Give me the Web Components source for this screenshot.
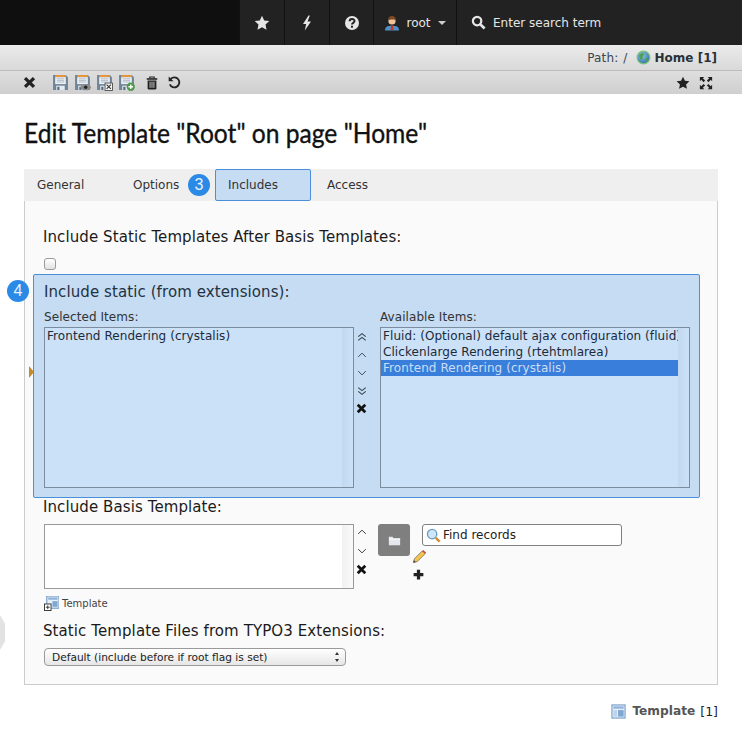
<!DOCTYPE html>
<html>
<head>
<meta charset="utf-8">
<title>Edit Template</title>
<style>
html, body { margin: 0; padding: 0; background: #fff; }
body { font-family: "DejaVu Sans", Verdana, sans-serif; color: #222; width: 742px; height: 732px; overflow: hidden; position: relative; }
</style>
</head>
<body>
<x-topbar></x-topbar>
<x-pathbar></x-pathbar>
<x-toolbar></x-toolbar>
<x-page></x-page>

<script>
const saveBase = `
  <path d="M1 1h12l2 2v12H1z" fill="#6f8499"/>
  <rect x="3" y="1" width="10" height="2" fill="#e8963a"/>
  <rect x="3" y="3" width="10" height="6.5" fill="#eef1f4"/>
  <path d="M4.5 4.5h7M4.5 6h7M4.5 7.5h7" stroke="#aab6c2" stroke-width=".8"/>
  <rect x="4" y="11" width="8" height="4" fill="#e6eaee"/>
  <rect x="5" y="12" width="2" height="3" fill="#55677a"/>`;

const ICONS = {
    star: `<path d="M8 .8l2.2 4.7 5.1.6-3.8 3.5 1 5.1L8 12.2l-4.5 2.5 1-5.1L.7 6.1l5.1-.6z" fill="currentColor"/>`,
    bolt: `<path d="M9.5.5L4 9h3.2L5.8 15.5 12 6.5H8.6L10.8.5z" fill="currentColor"/>`,
    help: `<circle cx="8" cy="8" r="7" fill="currentColor"/><path d="M5.6 6.3c0-3.1 4.9-3.1 4.9-.2 0 1.800-2.500 1.800-2.500 3.500" fill="none" stroke="#222" stroke-width="2"/><rect x="7" y="10.700" width="2" height="2" fill="#222"/>`,
    user: `<path d="M1 15.500c0-3.500 2-4.800 7-4.800s7 1.300 7 4.800z" fill="#4f8fc9"/><path d="M7 10.500h2l.5 4.500h-3z" fill="#c23b2a"/><circle cx="8" cy="6" r="3.600" fill="#f0c39a"/><path d="M4.300 5.500C4 2 6 1 8 1s4 1 3.700 4.500C10.500 4 6 4.200 4.300 5.500z" fill="#7a4a25"/>`,
    search: `<circle cx="6.500" cy="6.500" r="4.500" fill="none" stroke="currentColor" stroke-width="2.400"/><path d="M10 10l4.500 4.500" stroke="currentColor" stroke-width="3"/>`,
    globe: `<defs><radialGradient id="g" cx=".4" cy=".35" r=".7"><stop offset="0" stop-color="#8fc4e8"/><stop offset="1" stop-color="#2f6f9f"/></radialGradient></defs><circle cx="8" cy="8" r="6.800" fill="url(#g)" stroke="#7cc37c" stroke-width="1.300"/><path d="M4 4.500c2-1.500 4-1 4.500 0S6.500 7 7 8.500 5.500 11 4.500 9.500 3 6 4 4.500zM10 9c1.500-1 3-.5 2.500 1s-2 2.500-2.500 2z" fill="#4f9f57"/>`,
    close: `<path d="M2.500 2.500l11 11M13.500 2.500l-11 11" stroke="currentColor" stroke-width="4" fill="none"/>`,
    save: saveBase,
    saveview: saveBase + `<ellipse cx="11" cy="12.500" rx="5" ry="2.800" fill="#8a8a8a"/><circle cx="11" cy="12.500" r="1.600" fill="#222"/>`,
    saveclose: saveBase + `<rect x="8.500" y="8.500" width="7" height="7" fill="#f4f4f4" stroke="#444" stroke-width=".8"/><path d="M10 10l4 4M14 10l-4 4" stroke="#333" stroke-width="1"/>`,
    savenew: saveBase + `<circle cx="12" cy="12" r="3.900" fill="#4f9a4a"/><path d="M12 9.800v4.400M9.800 12h4.400" stroke="#fff" stroke-width="1.300"/>`,
    trash: `<path d="M5.500 2.500V1.200h5v1.300" fill="none" stroke="currentColor" stroke-width="1.300"/><rect x="2" y="2.500" width="12" height="1.800" fill="currentColor"/><path d="M3 5h10v9.500l-1 1H4l-1-1z" fill="currentColor"/><path d="M5.800 6.500v7M8 6.500v7M10.200 6.500v7" stroke="#d8d8d8" stroke-width="1"/>`,
    undo: `<path d="M4 4.200A5.300 5.300 0 1 1 3 10" fill="none" stroke="currentColor" stroke-width="2"/><path d="M1.800 1.500v5.200H7z" fill="currentColor"/>`,
    expand: `<path d="M1 1h5L4.400 2.600 7 5.200 5.200 7 2.600 4.400 1 6zM15 1v5l-1.600-1.600L10.800 7 9 5.200l2.600-2.600L10 1zM1 15v-5l1.600 1.600L5.200 9 7 10.800l-2.600 2.600L6 15zM15 15h-5l1.600-1.600L9 10.800 10.800 9l2.600 2.600L15 10z" fill="currentColor"/>`,
    top: `<path d="M3 7.500l5-4 5 4M3 12.500l5-4 5 4" fill="none" stroke="currentColor" stroke-width="1.500"/>`,
    up: `<path d="M3 10.500l5-5 5 5" fill="none" stroke="currentColor" stroke-width="1.300"/>`,
    down: `<path d="M3 5.500l5 5 5-5" fill="none" stroke="currentColor" stroke-width="1.300"/>`,
    bottom: `<path d="M3 3.500l5 4 5-4M3 8.500l5 4 5-4" fill="none" stroke="currentColor" stroke-width="1.500"/>`,
    plus: `<path d="M8 2v12M2 8h12" stroke="currentColor" stroke-width="4"/>`,
    folder: `<path d="M2 4h4l1 1.500h7V13H2z" fill="#e4e8ec"/><path d="M2 6.500h12" stroke="#fff" stroke-width="1"/>`,
    pencil: `<path d="M1.500 14.500l1-4L11 2l3 3-8.500 8.500z" fill="#f4c64a" stroke="#555" stroke-width=".7"/><path d="M11 2l1-1 3 3-1 1z" fill="#d33"/><path d="M1.500 14.500l.6-2.400 1.800 1.800z" fill="#333"/>`,
    lens: `<circle cx="6.500" cy="6.500" r="5" fill="#cfe6f7" stroke="#6d9bc0" stroke-width="1.400"/><path d="M10.500 10.500l4 4" stroke="#d58a2e" stroke-width="2.600"/>`,
    template: `<rect x="1" y="1" width="14" height="14" fill="#e6eef6" stroke="#5f8cbd"/><rect x="2.500" y="2.500" width="11" height="2.500" fill="#8fb4dc"/><rect x="2.500" y="6.500" width="4" height="7" fill="#bcd3ea"/><rect x="7.500" y="6.500" width="6" height="7" fill="#7ea7d2"/>`,
    templatenew: `<rect x="3" y="0" width="13" height="13" fill="#e6eef6" stroke="#5f8cbd"/><rect x="4.500" y="1.500" width="10" height="2.500" fill="#8fb4dc"/><rect x="9" y="5.500" width="5.500" height="6" fill="#7ea7d2"/><rect x=".5" y="8.500" width="7" height="7" fill="#fff" stroke="#333"/><path d="M4 10v4M2 12h4" stroke="#333"/>`
};

class XIcon extends HTMLElement {
    connectedCallback() {
        const size = this.getAttribute('size') || 16;
        this.attachShadow({mode: 'open'}).innerHTML = `
            <style>:host { display: block; width: ${size}px; height: ${size}px; flex: none; } svg { display: block; }</style>
            <svg width="${size}" height="${size}" viewBox="0 0 16 16">${ICONS[this.getAttribute('name')]}</svg>`;
    }
}

class XBadge extends HTMLElement {
    constructor() {
        super();
        this.attachShadow({mode: 'open'}).innerHTML = `
            <style>
                :host { position: absolute; width: 22px; height: 22px; border-radius: 50%; background: #2b8ae6; color: #e8f3fd;
                    display: flex; align-items: center; justify-content: center; font: 16px "Liberation Sans", Arial, sans-serif; }
            </style><slot></slot>`;
    }
}

class XTopbar extends HTMLElement {
    constructor() {
        super();
        this.attachShadow({mode: 'open'}).innerHTML = `
            <style>
                :host { display: flex; height: 45px; background: #0f0f0f; padding-left: 239px; color: #e6e6e6; font: 12px "DejaVu Sans", sans-serif; }
                .bar { flex: 1; display: flex; background: #222; }
                .item { display: flex; align-items: center; justify-content: center; border-left: 1px solid #111; box-sizing: border-box; height: 45px; }
                .i { width: 45px; }
                .user { width: 83px; gap: 6px; }
                .search { padding-left: 14px; gap: 7px; justify-content: flex-start; flex: 1; }
                .caret { width: 0; height: 0; border: 4px solid transparent; border-top-color: #ccc; border-bottom: 0; margin-left: 1px; }
            </style>
            <div class="bar">
                <div class="item i"><x-icon name="star"></x-icon></div>
                <div class="item i"><x-icon name="bolt"></x-icon></div>
                <div class="item i" style="width:44px"><x-icon name="help"></x-icon></div>
                <div class="item user"><x-icon name="user"></x-icon><span>root</span><i class="caret"></i></div>
                <div class="item search"><x-icon name="search" size="15"></x-icon><span>Enter search term</span></div>
            </div>`;
    }
}

class XPathbar extends HTMLElement {
    constructor() {
        super();
        this.attachShadow({mode: 'open'}).innerHTML = `
            <style>
                :host { display: flex; justify-content: flex-end; align-items: center; gap: 4px; height: 26px; box-sizing: border-box; padding-right: 25px;
                    background: linear-gradient(#ebebeb, #d9d9d9); border-bottom: 1px solid #bdbdbd; font-size: 12px; color: #3a4652; }
                span { word-spacing: 1px; letter-spacing: .15px; margin-right: 4px; }
                b { color: #2a3138; }
            </style>
            <span>Path: /</span><x-icon name="globe" size="15"></x-icon><b>Home [1]</b>`;
    }
}

class XToolbar extends HTMLElement {
    constructor() {
        super();
        this.attachShadow({mode: 'open'}).innerHTML = `
            <style>
                :host { display: flex; align-items: center; height: 23px; padding: 0 29px 0 23px; color: #222;
                    background: linear-gradient(#dedede, #cfcfcf); }
                .sp { flex: 1; }
            </style>
            <x-icon name="close" size="13" style="margin-right:16px"></x-icon>
            <x-icon name="save" size="17" style="margin-right:5px"></x-icon>
            <x-icon name="saveview" size="17" style="margin-right:5px"></x-icon>
            <x-icon name="saveclose" size="17" style="margin-right:5px"></x-icon>
            <x-icon name="savenew" size="17" style="margin-right:10px"></x-icon>
            <x-icon name="trash" size="14" style="margin-right:8px"></x-icon>
            <x-icon name="undo" size="15"></x-icon>
            <div class="sp"></div>
            <x-icon name="star" size="14" style="margin-right:9px"></x-icon>
            <x-icon name="expand" size="14"></x-icon>`;
    }
}

class XTabs extends HTMLElement {
    constructor() {
        super();
        this.attachShadow({mode: 'open'}).innerHTML = `
            <style>
                :host { display: flex; height: 32px; box-sizing: border-box; background: #efefef; font-size: 12px; color: #333; position: relative; }
                .tab { display: flex; align-items: center; padding-left: 13px; box-sizing: border-box; height: 32px; }
                .active { background: #c5dcf3; border: 1px solid #4a90d9; border-radius: 2px; padding-left: 12px; }
                x-badge { left: 164px; top: 5px; }
            </style>
            <div class="tab" style="width:96px">General</div>
            <div class="tab" style="width:95px">Options</div>
            <div class="tab active" style="width:96px">Includes</div>
            <div class="tab" style="width:90px;padding-left:16px">Access</div>
            <x-badge>3</x-badge>`;
    }
}

class XListbox extends HTMLElement {
    constructor() {
        super();
        this.attachShadow({mode: 'open'}).innerHTML = `
            <style>
                :host { display: block; position: relative; box-sizing: border-box; width: 310px; flex: none; height: var(--h, 161px); overflow: hidden;
                    border: 1px solid var(--line, #7a8c9e); background: var(--bg, #cae1f8); font-size: 12px; letter-spacing: .07px; line-height: 16px; color: #1d2a38; }
                .items { margin-right: 11px; overflow: hidden; }
                .bar { position: absolute; top: 0; right: 0; bottom: 0; width: 11px; background: linear-gradient(90deg, var(--s1, #c1d8ef), var(--s2, #cae1f8)); }
                ::slotted(div) { padding: 0 2px; white-space: nowrap; overflow: hidden; }
                ::slotted(.sel) { background: #3a7edb; color: #c9def5; }
            </style>
            <div class="items"><slot></slot></div><div class="bar"></div>`;
    }
}

class XMovers extends HTMLElement {
    constructor() {
        super();
        const names = (this.getAttribute('icons') || '').split(' ');
        this.attachShadow({mode: 'open'}).innerHTML = `
            <style>
                :host { display: flex; flex: none; flex-direction: column; align-items: flex-start; width: 26px; color: #3a4652; box-sizing: border-box; padding: var(--top, 1px) 0 0 2px; gap: 6px; }
                .x { color: #111; }
            </style>
            ${names.map(n => `<x-icon name="${n}" size="${n === 'close' ? 11 : 12}" class="${n === 'close' ? 'x' : ''}"></x-icon>`).join('')}`;
    }
}

class XPage extends HTMLElement {
    constructor() {
        super();
        this.attachShadow({mode: 'open'}).innerHTML = `
            <style>
                :host { display: block; position: relative; padding: 0 24px; }
                h1 { margin: 0; padding-top: 24px; height: 51px; box-sizing: content-box; font: 400 26px/30px "Lato", sans-serif; color: #111; white-space: nowrap;
                    -webkit-text-stroke: .35px #111; transform: scaleX(.946); transform-origin: left top; }
                .panel { background: #fafafa; border: 1px solid #ccc; border-top: 0; height: 484px; box-sizing: border-box; padding: 0 18px; position: relative; }
                h2 { margin: 0; font-weight: 400; font-size: 15px; letter-spacing: .09px; line-height: 20px; color: #1a1a1a; white-space: nowrap; }
                .check { display: block; width: 12px; height: 12px; box-sizing: border-box; border: 1px solid #9a9a9a; border-radius: 3px; background: linear-gradient(#fff, #e2e2e2); margin: 11px 0 4px 1px; }
                .hl { margin: 0 -1px 0 -10px; width: 667px; height: 224px; box-sizing: border-box; background: #c5dcf3; border: 1px solid #4a90d9; border-radius: 2px; padding: 7px 9px 0 10px; position: relative; }
                .hl h2 { color: #24313f; }
                .lab { font-size: 12px; letter-spacing: .07px; line-height: 14px; color: #333; margin: 8px 0 3px; }
                .cols { display: flex; }
                .col { width: 310px; flex: none; }
                .basis { display: flex; margin: 7px 0 0 1px; --h: 65px; --bg: #fff; --line: #999; --s1: #f1f1f1; --s2: #fafafa; }
                .basis-side { display: flex; gap: 0; }
                .basis x-movers { --top: 2px; width: 24px; gap: 7px; color: #333; }
                .folder { width: 32px; height: 32px; background: #7f7f7f; border-radius: 3px; display: flex; align-items: center; justify-content: center; }
                .find { display: flex; align-items: center; width: 200px; height: 22px; box-sizing: border-box; border: 1px solid #7f7f7f; border-radius: 3px; background: #fff; padding-left: 3px; gap: 2px; font-size: 12px; color: #222; }
                .basis-tools { width: 12px; margin-left: 2px; padding-top: 25px; display: flex; flex-direction: column; gap: 4px; }
                .link { display: flex; align-items: center; gap: 3px; font-size: 10px; height: 16px; margin: 6px 0 10px 1px; color: #444; }
                select { display: block; appearance: none; width: 302px; height: 18px; box-sizing: border-box; margin-top: 7px; border: 1px solid #9a9a9a; border-radius: 4px; background: linear-gradient(#fff, #e6e6e6); font: 10.600px "DejaVu Sans", sans-serif; color: #222; padding: 0 0 0 7px; }
                .selwrap { position: relative; width: 302px; margin-left: 1px; }
                .arrows { position: absolute; right: 6px; top: 4px; width: 5px; height: 10px; }
                .arrows::before, .arrows::after { content: ""; position: absolute; left: 0; border: 2.500px solid transparent; }
                .arrows::before { top: 0; border-bottom: 3px solid #333; border-top: 0; }
                .arrows::after { bottom: 0; border-top: 3px solid #333; border-bottom: 0; }
                .foot { display: flex; justify-content: flex-end; align-items: center; gap: 6px; height: 20px; margin-top: 16px; font-size: 12.200px; color: #555; }
                .foot span { color: #222; margin-left: -1px; font-size: 12.500px; }
                .hl x-badge { left: -27px; top: 5px; }
                .marker { position: absolute; left: 29px; top: 272px; width: 0; height: 0; border: 6px solid transparent; border-left: 5px solid #c58a2e; border-right: 0; }
                .handle { position: absolute; left: 0; top: 521px; width: 5px; height: 35px; background: #e2e2e2; clip-path: polygon(0 0, 100% 25%, 100% 75%, 0 100%); }
            </style>
            <h1>Edit Template "Root" on page "Home"</h1>
            <x-tabs></x-tabs>
            <div class="panel">
                <h2 style="padding-top:26px">Include Static Templates After Basis Templates:</h2>
                <input type="checkbox" class="check" style="appearance:none">
                <div class="hl">
                    <x-badge>4</x-badge>
                    <h2>Include static (from extensions):</h2>
                    <div class="cols">
                        <div class="col">
                            <div class="lab">Selected Items:</div>
                            <x-listbox><div>Frontend Rendering (crystalis)</div></x-listbox>
                        </div>
                        <x-movers icons="top up down bottom close" style="--top:29px"></x-movers>
                        <div class="col">
                            <div class="lab">Available Items:</div>
                            <x-listbox>
                                <div>Fluid: (Optional) default ajax configuration (fluid)</div>
                                <div>Clickenlarge Rendering (rtehtmlarea)</div>
                                <div class="sel">Frontend Rendering (crystalis)</div>
                            </x-listbox>
                        </div>
                    </div>
                </div>
                <h2 style="padding-top:0;margin-top:-1px">Include Basis Template:</h2>
                <div class="basis">
                    <x-listbox></x-listbox>
                    <x-movers icons="up down close"></x-movers>
                    <div class="basis-side">
                        <div class="folder"><x-icon name="folder" size="15"></x-icon></div>
                        <div class="basis-tools">
                            <x-icon name="pencil" size="15"></x-icon>
                            <x-icon name="plus" size="13"></x-icon>
                        </div>
                        <div class="find" style="margin-left:-2px"><x-icon name="lens" size="15"></x-icon>Find records</div>
                    </div>
                </div>
                <div class="link"><x-icon name="templatenew" size="15"></x-icon>Template</div>
                <h2>Static Template Files from TYPO3 Extensions:</h2>
                <div class="selwrap">
                    <select><option>Default (include before if root flag is set)</option></select>
                    <i class="arrows"></i>
                </div>
            </div>
            <div class="foot"><x-icon name="template" size="15"></x-icon><b>Template</b><span>[1]</span></div>
            <i class="marker"></i><i class="handle"></i>`;
    }
}

customElements.define('x-icon', XIcon);
customElements.define('x-badge', XBadge);
customElements.define('x-topbar', XTopbar);
customElements.define('x-pathbar', XPathbar);
customElements.define('x-toolbar', XToolbar);
customElements.define('x-tabs', XTabs);
customElements.define('x-listbox', XListbox);
customElements.define('x-movers', XMovers);
customElements.define('x-page', XPage);
</script>
</body>
</html>
